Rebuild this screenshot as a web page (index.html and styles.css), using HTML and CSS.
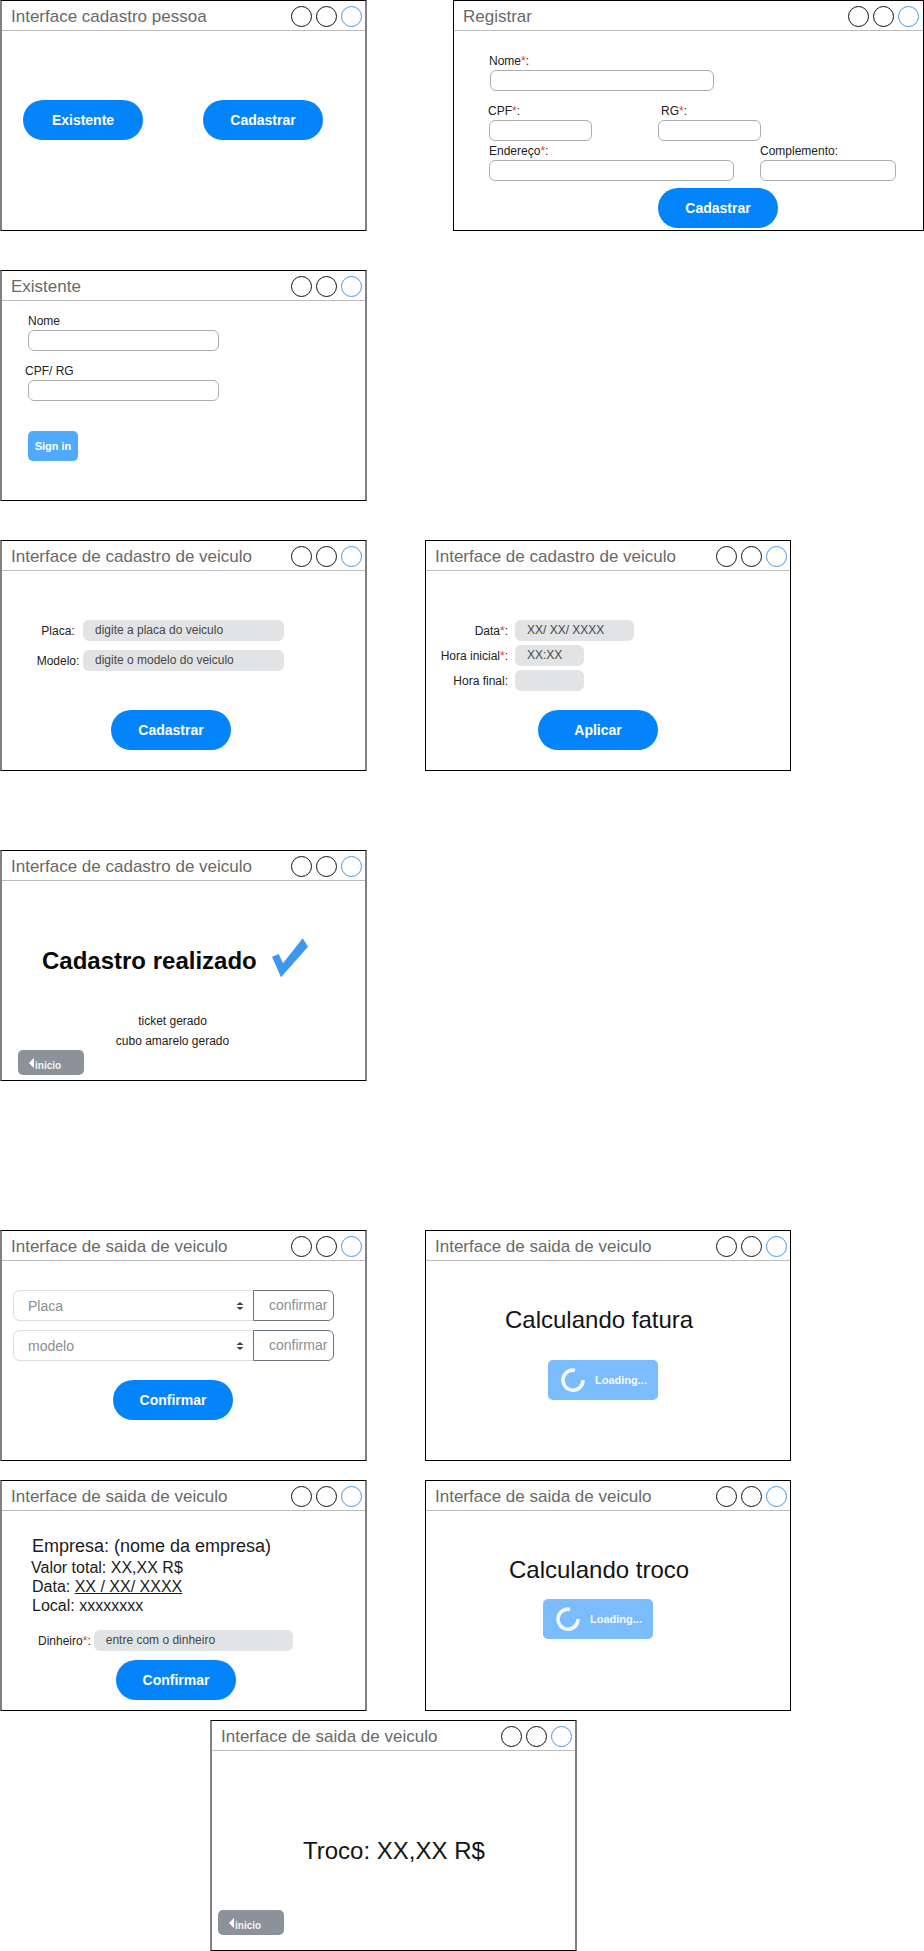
FILE: index.html
```html
<!DOCTYPE html>
<html lang="pt">
<head>
<meta charset="utf-8">
<title>Interfaces</title>
<link rel="stylesheet" href="styles.css">
</head>
<body>
<main class="canvas">

<section class="win soft w1">
  <header class="bar"><span class="title">Interface cadastro pessoa</span><span class="dots"><i></i><i></i><i class="blue"></i></span></header>
  <div class="body b1">
    <button class="pill">Existente</button>
    <button class="pill">Cadastrar</button>
  </div>
</section>

<section class="win w2">
  <header class="bar"><span class="title">Registrar</span><span class="dots"><i></i><i></i><i class="blue"></i></span></header>
  <div class="body b2">
    <div class="field f-nome"><label>Nome<b>*</b>:</label><div class="box bw224"></div></div>
    <div class="row r-cpf">
      <div class="field"><label class="nudge-1">CPF<b>*</b>:</label><div class="box bw103"></div></div>
      <div class="field"><label class="nudge3">RG<b>*</b>:</label><div class="box bw103"></div></div>
    </div>
    <div class="row r-end">
      <div class="field"><label>Endereço<b>*</b>:</label><div class="box bw245"></div></div>
      <div class="field"><label>Complemento:</label><div class="box bw135"></div></div>
    </div>
    <button class="pill p-reg">Cadastrar</button>
  </div>
</section>

<section class="win soft w3">
  <header class="bar"><span class="title">Existente</span><span class="dots"><i></i><i></i><i class="blue"></i></span></header>
  <div class="body b3">
    <div class="field"><label>Nome</label><div class="box bw190"></div></div>
    <div class="field f-cpf"><label class="nudge-3">CPF/ RG</label><div class="box bw190"></div></div>
    <button class="signin">Sign in</button>
  </div>
</section>

<section class="win soft w4">
  <header class="bar"><span class="title">Interface de cadastro de veiculo</span><span class="dots"><i></i><i></i><i class="blue"></i></span></header>
  <div class="body b4">
    <div class="line l4"><span class="lab lab-c">Placa:</span><div class="grey gw201">digite a placa do veiculo</div></div>
    <div class="line l4b"><span class="lab lab-c">Modelo:</span><div class="grey gw201">digite o modelo do veiculo</div></div>
    <button class="pill p4">Cadastrar</button>
  </div>
</section>

<section class="win w5">
  <header class="bar"><span class="title">Interface de cadastro de veiculo</span><span class="dots"><i></i><i></i><i class="blue"></i></span></header>
  <div class="body b5">
    <div class="line"><span class="lab lab-r">Data<b>*</b>:</span><div class="grey gw119">XX/ XX/ XXXX</div></div>
    <div class="line l5"><span class="lab lab-r">Hora inicial<b>*</b>:</span><div class="grey gw69">XX:XX</div></div>
    <div class="line l5"><span class="lab lab-r">Hora final:</span><div class="grey gw69"></div></div>
    <button class="pill p5">Aplicar</button>
  </div>
</section>

<section class="win soft w6">
  <header class="bar"><span class="title">Interface de cadastro de veiculo</span><span class="dots"><i></i><i></i><i class="blue"></i></span></header>
  <div class="body b6">
    <div class="done">
      <h2 class="done-text">Cadastro realizado</h2>
      <svg class="check" width="37" height="40" viewBox="0 0 37 40"><polygon fill="#3d97ee" points="0,18.7 6.7,16 11,25.3 30.7,0.3 36,8.7 9,39.3"/></svg>
    </div>
    <p class="note">ticket gerado<br>cubo amarelo gerado</p>
    <button class="back bk6"><svg width="5" height="10" viewBox="0 0 5 10"><polygon fill="#fff" points="5,0 0,5 5,10"/></svg><span>inicio</span></button>
  </div>
</section>

<section class="win soft w7">
  <header class="bar"><span class="title">Interface de saida de veiculo</span><span class="dots"><i></i><i></i><i class="blue"></i></span></header>
  <div class="body b7">
    <div class="group">
      <div class="select"><span>Placa</span><svg width="8" height="8" viewBox="0 0 8 8"><path fill="#444" d="M4 0l3.5 3h-7zM4 8L.5 5h7z"/></svg></div>
      <div class="confirm">confirmar</div>
    </div>
    <div class="group g2">
      <div class="select"><span>modelo</span><svg width="8" height="8" viewBox="0 0 8 8"><path fill="#444" d="M4 0l3.5 3h-7zM4 8L.5 5h7z"/></svg></div>
      <div class="confirm">confirmar</div>
    </div>
    <button class="pill p7">Confirmar</button>
  </div>
</section>

<section class="win w8">
  <header class="bar"><span class="title">Interface de saida de veiculo</span><span class="dots"><i></i><i></i><i class="blue"></i></span></header>
  <div class="body b8">
    <h2 class="big big-fat">Calculando fatura</h2>
    <div class="loading ld8"><svg width="24" height="24" viewBox="0 0 24 24"><path fill="none" stroke="#f2f8ff" stroke-width="3.6" d="M14 2.4A10 10 0 1 0 22 12"/></svg><span>Loading...</span></div>
  </div>
</section>

<section class="win soft w9">
  <header class="bar"><span class="title">Interface de saida de veiculo</span><span class="dots"><i></i><i></i><i class="blue"></i></span></header>
  <div class="body b9">
    <div class="info">
      <div class="info-head">Empresa: (nome da empresa)</div>
      <div class="info-line nudge-1">Valor total: XX,XX R$</div>
      <div class="info-line">Data: <u>XX / XX/ XXXX</u></div>
      <div class="info-line">Local: xxxxxxxx</div>
    </div>
    <div class="line l9"><span class="lab">Dinheiro<b>*</b>:</span><div class="grey gw198">entre com o dinheiro</div></div>
    <button class="pill p9">Confirmar</button>
  </div>
</section>

<section class="win w10">
  <header class="bar"><span class="title">Interface de saida de veiculo</span><span class="dots"><i></i><i></i><i class="blue"></i></span></header>
  <div class="body b8">
    <h2 class="big big-tro">Calculando troco</h2>
    <div class="loading ld10"><svg width="24" height="24" viewBox="0 0 24 24"><path fill="none" stroke="#f2f8ff" stroke-width="3.6" d="M14 2.4A10 10 0 1 0 22 12"/></svg><span>Loading...</span></div>
  </div>
</section>

<section class="win soft w11">
  <header class="bar"><span class="title">Interface de saida de veiculo</span><span class="dots"><i></i><i></i><i class="blue"></i></span></header>
  <div class="body b11">
    <h2 class="big big-change">Troco: XX,XX R$</h2>
    <button class="back bk11"><svg width="5" height="10" viewBox="0 0 5 10"><polygon fill="#fff" points="5,0 0,5 5,10"/></svg><span>inicio</span></button>
  </div>
</section>

</main>
</body>
</html>
```
FILE: styles.css
```css
* { box-sizing: border-box; }
html, body { margin: 0; padding: 0; background: #fff; }
body { font-family: "Liberation Sans", Arial, sans-serif; color: #222; }
.canvas { position: relative; width: 924px; height: 1951px; overflow: hidden; }

/* windows on the free canvas */
.win { position: absolute; height: 231px; width: 366px; background: #fff; border: 1px solid #000; display: flex; flex-direction: column; }
.soft { width: 367px; border-left: 2px solid #808080; border-right: 2px solid #808080; }
.w1 { left: 0; top: 0; }
.w2 { left: 453px; top: 0; width: 471px; }
.w3 { left: 0; top: 270px; }
.w4 { left: 0; top: 540px; }
.w5 { left: 425px; top: 540px; }
.w6 { left: 0; top: 850px; }
.w7 { left: 0; top: 1230px; }
.w8 { left: 425px; top: 1230px; }
.w9 { left: 0; top: 1480px; }
.w10 { left: 425px; top: 1480px; }
.w11 { left: 210px; top: 1720px; }

/* window header */
.bar { flex: none; height: 30px; display: flex; align-items: center; justify-content: space-between; padding: 1px 3px 0 9px; border-bottom: 1px solid #bdbdbd; }
.w2 .bar { padding-left: 9px; padding-right: 4px; }
.w5 .bar, .w8 .bar, .w10 .bar { padding-left: 9px; }
.title { font-size: 17px; color: #696969; white-space: nowrap; margin-top: 1px; }
.dots { display: flex; gap: 4px; }
.dots i { display: block; width: 21px; height: 21px; border: 1.3px solid #111; border-radius: 50%; }
.dots i.blue { border-color: #3f9ae8; }

.body { flex: 1; min-height: 0; }

/* pill buttons */
button { font-family: inherit; border: 0; padding: 0; display: block; cursor: default; }
.pill { width: 120px; height: 40px; border-radius: 20px; background: #0484fb; color: #fff; font-size: 14px; font-weight: 700; }

/* labels and inputs */
label, .lab { font-size: 12px; line-height: 16px; color: #222; white-space: nowrap; }
label b, .lab b { color: #e8363c; font-weight: 400; }
.field label { display: block; margin-bottom: 1px; }
.box { height: 21px; border: 1px solid #adadad; border-radius: 6px; background: #fff; }
.bw103 { width: 103px; }
.bw135 { width: 136px; }
.bw190 { width: 191px; }
.bw224 { width: 224px; }
.bw245 { width: 245px; }
.nudge-1 { margin-left: -1px; }
.nudge3 { margin-left: 3px; }
.nudge-3 { margin-left: -3px; }

.row { display: flex; }
.line { display: flex; align-items: center; }
.grey { height: 21px; line-height: 21px; padding-left: 12px; background: #e1e3e5; border-radius: 6px; font-size: 12px; color: #484848; white-space: nowrap; }
.gw69 { width: 69px; }
.gw119 { width: 119px; }
.gw198 { width: 199px; }
.gw201 { width: 201px; }

/* window 1 */
.b1 { display: flex; gap: 60px; padding: 69px 0 0 21px; }

/* window 2 */
.b2 { padding: 22px 0 0 35px; }
.f-nome { margin-left: 1px; }
.f-nome label { margin-left: -1px; }
.r-cpf { gap: 66px; margin-top: 12px; }
.r-end { gap: 26px; margin-top: 2px; }
.p-reg { margin: 7px 0 0 169px; }

/* window 3 */
.b3 { padding: 12px 0 0 26px; }
.f-cpf { margin-top: 12px; }
.signin { width: 50px; height: 30px; margin-top: 30px; border-radius: 5px; background: #4fa9fc; color: #fff; font-size: 11px; font-weight: 700; }

/* window 4 */
.b4 { padding: 49px 0 0 32px; }
.lab-c { width: 48px; text-align: center; margin-right: 1px; }
.l4b { margin-top: 9px; }
.p4 { margin: 39px 0 0 77px; }

/* window 5 */
.b5 { padding: 49px 0 0 0; }
.lab-r { width: 82px; margin-right: 7px; text-align: right; }
.l5 { margin-top: 4px; }
.p5 { margin: 19px 0 0 112px; }

/* window 6 */
.b6 { padding: 66px 0 0 40px; }
.done { display: flex; align-items: center; height: 28px; }
.done-text { margin: 0; font-size: 24px; line-height: 28px; font-weight: 700; color: #0a0a0a; white-space: nowrap; }
.check { flex: none; margin: -6px 0 0 15px; }
.note { margin: 36px 0 0 -40px; width: 341px; text-align: center; font-size: 12px; line-height: 20px; color: #222; }
.back { display: flex; align-items: center; width: 66px; height: 25px; padding-left: 11px; border-radius: 5px; background: #8b9299; color: #f4f4f4; font-size: 10px; font-weight: 700; }
.back span { margin: 5px 0 0 1px; }
.back svg { flex: none; }
.bk6 { margin: -1px 0 0 -24px; }

/* window 7 */
.b7 { padding: 29px 0 0 11px; }
.group { display: flex; height: 31px; font-size: 14px; color: #8a8f94; }
.g2 { margin-top: 9px; }
.select { width: 240px; display: flex; align-items: center; justify-content: space-between; padding: 0 9px 0 14px; border: 1px solid #dcdfe2; border-right: 0; border-radius: 7px 0 0 7px; }
.confirm { width: 81px; line-height: 29px; padding-left: 15px; border: 1px solid #6c757d; border-radius: 0 6px 6px 0; white-space: nowrap; }
.p7 { margin: 19px 0 0 100px; }

/* windows 8 and 10 */
.b8 { padding-top: 45px; }
.big { margin: 0; font-size: 24px; line-height: 28px; font-weight: 400; color: #141414; white-space: nowrap; }
.big-fat { margin-left: 79px; }
.big-tro { margin-left: 83px; }
.loading { display: flex; align-items: center; width: 110px; height: 40px; padding-left: 13px; border-radius: 5px; background: #7bbcfc; color: #f4f9ff; font-size: 11px; font-weight: 700; }
.loading span { margin-left: 10px; }
.ld8 { margin: 26px 0 0 122px; }
.ld10 { margin: 15px 0 0 117px; }

/* window 9 */
.b9 { padding: 25px 0 0 30px; }
.info { color: #1c1c1c; white-space: nowrap; }
.info-head { font-size: 18px; line-height: 21px; margin-bottom: 1px; }
.info-line { font-size: 16px; line-height: 19px; }
.l9 { margin: 15px 0 0 6px; }
.l9 .lab { margin-right: 3px; }
.p9 { margin: 9px 0 0 84px; }

/* window 11 */
.b11 { padding-top: 86px; }
.big-change { margin-left: 91px; }
.bk11 { margin: 45px 0 0 6px; }
```
